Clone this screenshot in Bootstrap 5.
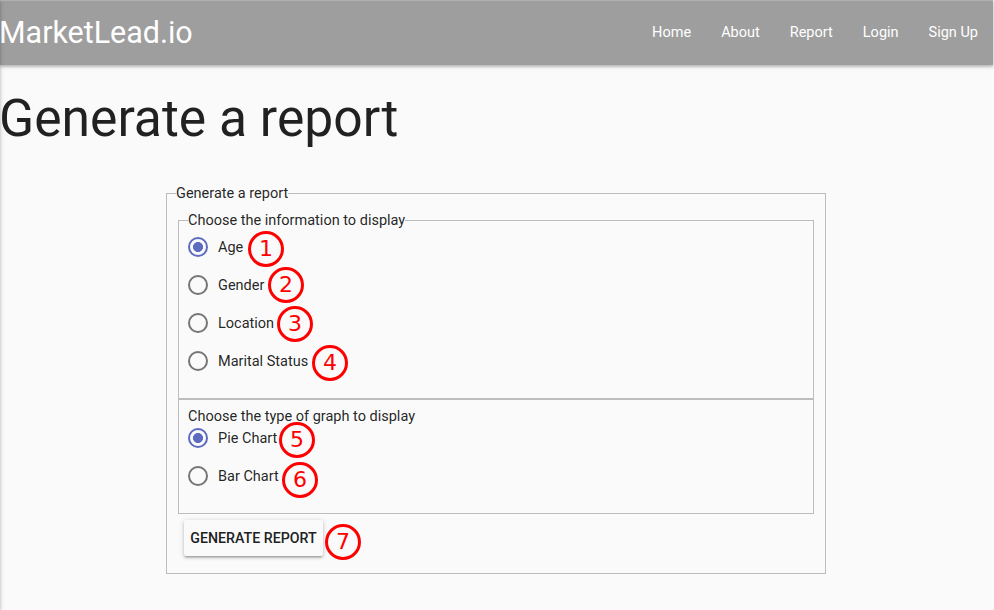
<!DOCTYPE html>
<html lang="en">
<head>
<meta charset="utf-8">
<meta name="viewport" content="width=device-width, initial-scale=1">
<title>MarketLead.io</title>
<link rel="stylesheet" href="https://cdn.jsdelivr.net/npm/bootstrap@5.3.0/dist/css/bootstrap.min.css">
<style>
body { font-family: Roboto, sans-serif; font-size: 14.5px; color: rgba(0,0,0,.87); background: #fafafa; min-height: 610px; overflow: hidden; }
.page { position: relative; width: 993px; min-height: 610px; }
/* soft edge of the closed side drawer */
.page::before { content: ""; position: absolute; z-index: 5; top: 0; bottom: 0; left: -10px; width: 10px; box-shadow: 0 2px 2px 0 rgba(0,0,0,.14), 0 3px 1px -2px rgba(0,0,0,.12), 0 1px 5px 0 rgba(0,0,0,.2); }
.site-nav { height: 65px; border-top: 1px solid #b1b1b1; background: #9e9e9e; box-shadow: 0 2px 2px 0 rgba(0,0,0,.14), 0 1px 5px 0 rgba(0,0,0,.2); }
.site-nav .navbar-brand { font-size: 30.45px; line-height: 64px; margin-left: -1px !important; }
.site-nav .navbar-nav .nav-link { padding: 0 15px; line-height: 63px; font-size: 14.5px; }
.page-title { font-size: 51.62px; line-height: 57px; font-weight: 400; margin: 25px 0 36px -1px; }
.report-form { width: 660px; margin-left: 166px; }
.box { border: 1px solid #bdbdbd; padding: 0 9px 12px; }
.box-outer { padding: 6px 11px 17px; }
.box-title { float: none; width: auto; font-size: 14.5px; line-height: 21px; height: 21px; margin: 0; padding: 0; }
.box-outer > .box-title { margin-left: -2px; }
.info-box { padding-top: 3px; }
.graph-box { padding-top: 5px; }
.graph-box .box-title { height: 20px; line-height: 23px; }
.choice { height: 26px; margin-bottom: 12px; }
.choice label { padding-top: 2px; }
.choice .form-check-input { width: 20px; height: 20px; margin: 0 10px 0 0; border: 2px solid #757575; background: #fafafa; flex: none; }
.choice .form-check-input:checked { border-color: #5c6bc0; background: radial-gradient(circle, #5c6bc0 4.7px, transparent 5.3px); }
.note-anchor { position: relative; }
.note { position: absolute; width: 36px; height: 36px; border: 3px solid #f00; border-radius: 50%; color: #f00; font: 22px/30px "DejaVu Sans", sans-serif; text-align: center; }
.n1 { left: 60px; top: -3px; }
.n2 { left: 80px; top: -5px; }
.n3 { left: 89px; top: -4px; }
.n4 { left: 124px; top: -3px; }
.n5 { left: 91px; top: -3px; }
.n6 { left: 94px; top: -1px; }
.n7 { left: 141px; top: 4px; }
.btn-report { --bs-btn-bg: #fafafa; --bs-btn-color: #212121; height: 36px; width: 139px; padding: 0; border: 0; border-radius: 2px; font-size: 14.2px; font-weight: 500; line-height: 36px; white-space: nowrap; box-shadow: 0 2px 2px 0 rgba(0,0,0,.14), 0 3px 1px -2px rgba(0,0,0,.12), 0 1px 5px 0 rgba(0,0,0,.2); }
.submit-row { width: 139px; margin: 6px 0 0 6px; }
</style>
<script src="https://cdn.jsdelivr.net/npm/bootstrap@5.3.0/dist/js/bootstrap.bundle.min.js"></script>
</head>
<body>
<div class="page">
  <nav class="site-nav navbar navbar-expand p-0 d-flex justify-content-between align-items-start" data-bs-theme="dark">
    <a class="navbar-brand text-white p-0 m-0" href="#">MarketLead.io</a>
    <ul class="navbar-nav">
      <li class="nav-item"><a class="nav-link text-white" href="#">Home</a></li>
      <li class="nav-item"><a class="nav-link text-white" href="#">About</a></li>
      <li class="nav-item"><a class="nav-link text-white" href="#">Report</a></li>
      <li class="nav-item"><a class="nav-link text-white" href="#">Login</a></li>
      <li class="nav-item"><a class="nav-link text-white" href="#">Sign Up</a></li>
    </ul>
  </nav>
  <h1 class="page-title">Generate a report</h1>
  <form class="report-form">
    <fieldset class="box box-outer">
      <legend class="box-title">Generate a report</legend>
      <fieldset class="box info-box">
        <legend class="box-title">Choose the information to display</legend>
        <div class="choice note-anchor d-flex align-items-center"><input class="form-check-input" type="radio" name="info" id="age" checked><label for="age">Age</label><span class="note n1">1</span></div>
        <div class="choice note-anchor d-flex align-items-center"><input class="form-check-input" type="radio" name="info" id="gender"><label for="gender">Gender</label><span class="note n2">2</span></div>
        <div class="choice note-anchor d-flex align-items-center"><input class="form-check-input" type="radio" name="info" id="location"><label for="location">Location</label><span class="note n3">3</span></div>
        <div class="choice note-anchor d-flex align-items-center"><input class="form-check-input" type="radio" name="info" id="marital"><label for="marital">Marital Status</label><span class="note n4">4</span></div>
      </fieldset>
      <div class="box graph-box" role="group">
        <div class="box-title">Choose the type of graph to display</div>
        <div class="choice note-anchor d-flex align-items-center"><input class="form-check-input" type="radio" name="graph" id="pie" checked><label for="pie">Pie Chart</label><span class="note n5">5</span></div>
        <div class="choice note-anchor d-flex align-items-center"><input class="form-check-input" type="radio" name="graph" id="bar"><label for="bar">Bar Chart</label><span class="note n6">6</span></div>
      </div>
      <div class="submit-row note-anchor d-flex">
        <button class="btn btn-report text-uppercase" type="button">Generate report</button><span class="note n7">7</span>
      </div>
    </fieldset>
  </form>
</div>
</body>
</html>
